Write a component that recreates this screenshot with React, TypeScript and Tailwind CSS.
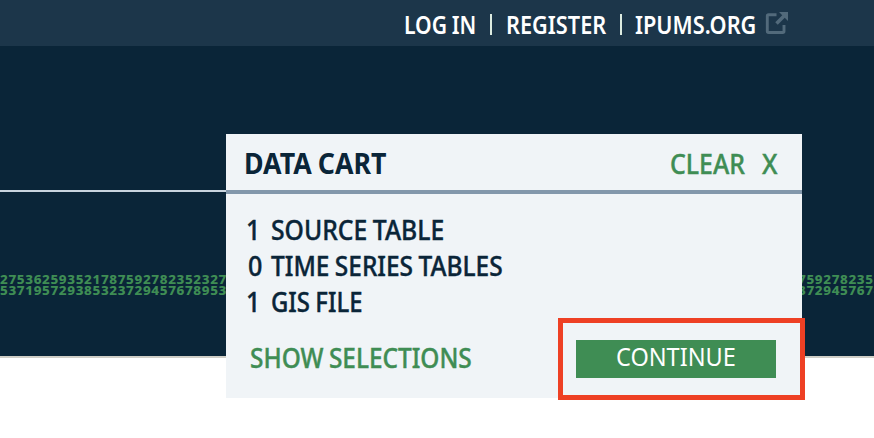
const label = "inline-block origin-left whitespace-nowrap [word-spacing:-1px]";

function ExternalIcon() {
  return (
    <svg width="24" height="24" viewBox="0 0 24 24" className="block">
      <path d="M11.5 3.7H3.6Q2.3 3.7 2.3 5V20.2Q2.3 21.5 3.6 21.5H17.7Q19 21.5 19 20.2V14" fill="none" stroke="#526a7b" strokeWidth="2.9" />
      <path d="M11.5 12.5L19 5" stroke="#526a7b" strokeWidth="3.6" />
      <path d="M14 1H23V10Z" fill="#526a7b" />
    </svg>
  );
}

function Row({ count, text, scale }: { count: string; text: string; scale: string }) {
  return (
    <li className="flex h-9 items-center">
      <span className={`w-[25px] ${count === "0" ? "pl-0.5" : ""}`}>
        <span className="inline-block origin-left scale-x-[0.93]">{count}</span>
      </span>
      <span className={`${label} ${scale}`}>{text}</span>
    </li>
  );
}

export default function App() {
  return (
    <div className="relative h-[438px] w-[874px] overflow-hidden bg-white font-['Noto_Sans',sans-serif] text-[#0a2538]">
      <header className="flex h-[46px] items-center bg-[#1c364a] pl-[404px] pt-[3px] text-[25px] font-[600] leading-[40px] text-white">
        <a className="-mt-0.5 w-[86px]"><span className={`${label} scale-x-[0.845]`}>LOG IN</span></a>
        <span className="h-[21px] w-0.5 bg-[#dcebe0]" />
        <a className="-mt-0.5 ml-[14px] w-[114px]"><span className={`${label} scale-x-[0.868]`}>REGISTER</span></a>
        <span className="h-[21px] w-0.5 bg-[#dcebe0]" />
        <a className="-mt-0.5 ml-[13px] w-[130px]"><span className={`${label} scale-x-[0.868]`}>IPUMS.ORG</span></a>
        <span className="-mt-[4px]"><ExternalIcon /></span>
      </header>
      <section className="flex h-[312px] flex-col border-b-2 border-[#cfcec6] bg-[#0a2538] pt-36">
        <div className="h-0.5 w-[226px] shrink-0 bg-[#c9d5df]" />
        <div className="mt-[82px] flex justify-between text-[12px] font-extrabold leading-[11px] tracking-[0.57px] text-[#3f8d54]">
          <div className="w-[226px] overflow-hidden whitespace-nowrap">
            <div className="w-[200px] origin-left scale-x-[1.12]">275362593521787592782352327</div>
            <div className="w-[200px] origin-left scale-x-[1.12]">537195729385323729457678953</div>
          </div>
          <div className="w-[73px] overflow-hidden whitespace-nowrap">
            <div className="-ml-[3px] w-[120px] origin-left scale-x-[1.12]">7592782352</div>
            <div className="-ml-[3px] w-[120px] origin-left scale-x-[1.12]">3729457674</div>
          </div>
        </div>
      </section>
      <aside className="absolute left-[226px] top-[134px] h-[264px] w-[576px] bg-[#f0f4f7]">
        <div className="flex h-[60px] items-center border-b-4 border-[#8297ab] pl-[18px] pt-[3px]">
          <h2 className="-mt-0.5 w-[426px] text-[29px] font-bold leading-[40px]"><span className={`${label} scale-x-[0.922]`}>DATA CART</span></h2>
          <a className="w-[92px] text-[27px] font-medium leading-[40px] text-[#3f8d54] [-webkit-text-stroke:0.4px]"><span className={`${label} scale-x-[0.922]`}>CLEAR</span></a>
          <a className="text-[27px] font-medium leading-[40px] text-[#3f8d54] [-webkit-text-stroke:0.4px]"><span className={`${label} scale-x-[0.94]`}>X</span></a>
        </div>
        <ul className="mt-[18px] pl-[20px] text-[27px] font-medium leading-[36px] [-webkit-text-stroke:0.4px]">
          <Row count="1" text="SOURCE TABLE" scale="scale-x-[0.915]" />
          <Row count="0" text="TIME SERIES TABLES" scale="scale-x-[0.905]" />
          <Row count="1" text="GIS FILE" scale="scale-x-[0.885]" />
        </ul>
        <div className="mt-5 flex h-[38px] items-center justify-between pl-6 pr-[26px]">
          <a className="-mt-0.5 text-[27px] font-medium leading-[38px] text-[#3f8d54] [-webkit-text-stroke:0.4px]"><span className={`${label} scale-x-[0.903]`}>SHOW SELECTIONS</span></a>
          <button className="h-[38px] w-[200px] bg-[#3f8d54] pb-1.5 text-left text-[25px] leading-[32px] text-white"><span className={`${label} ml-10 scale-x-[0.94]`}>CONTINUE</span></button>
        </div>
      </aside>
      <div className="absolute left-[558px] top-[318px] h-[82px] w-[247px] border-[5px] border-[#ee4024]" />
    </div>
  );
}
